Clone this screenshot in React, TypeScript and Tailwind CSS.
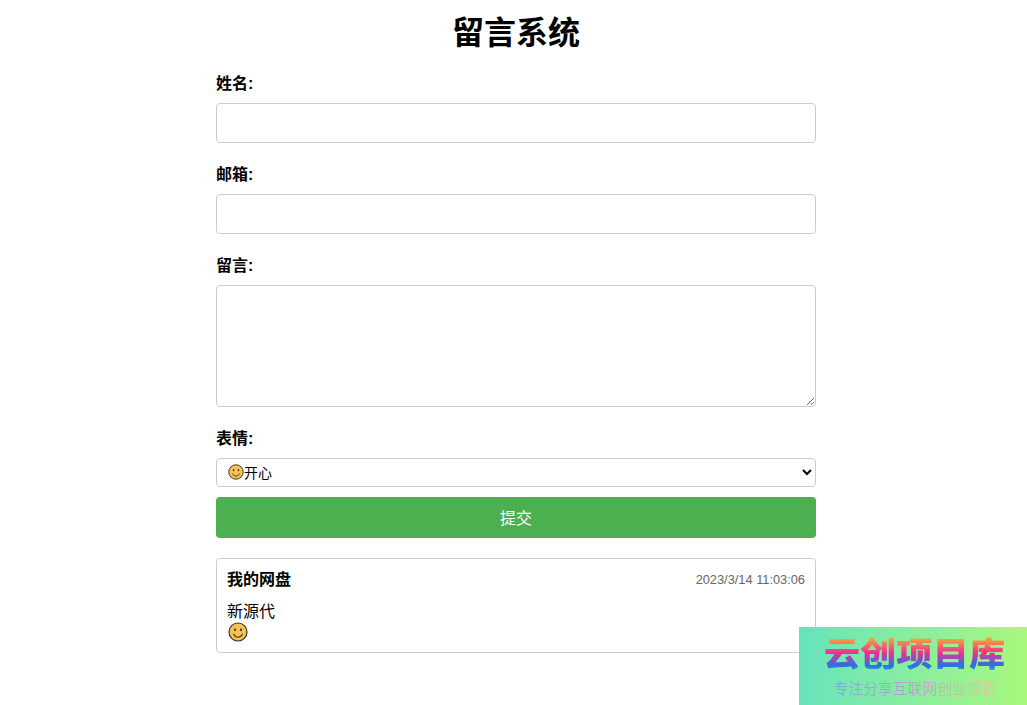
import { useState } from 'react'

const FONT = 'font-["Liberation_Sans","Noto_Sans_CJK_SC",sans-serif]'

function Smiley({ className }: { className: string }) {
  return (
    <svg viewBox="0 0 20 20" className={className}>
      <circle cx="10" cy="10" r="9" fill="#f6c253" stroke="#3a3228" strokeWidth="1.2" />
      <ellipse cx="7" cy="7.8" rx="1" ry="1.4" fill="#3a3228" />
      <ellipse cx="13" cy="7.8" rx="1" ry="1.4" fill="#3a3228" />
      <path d="M5.6 12.2c1.2 2.1 2.8 3 4.4 3s3.2-.9 4.4-3" fill="none" stroke="#3a3228" strokeWidth="1.1" strokeLinecap="round" />
    </svg>
  )
}

function Watermark() {
  return (
    <div className="absolute left-[799px] top-[627px] flex h-[78px] w-[228px] flex-col items-center bg-gradient-to-r from-[#66e3bb] to-[#a9f77c]">
      <div className="mt-[7px] ml-[3px] scale-x-[1.1] bg-[linear-gradient(180deg,#f7a13a_12%,#ee2f96_45%,#2c6fe0_75%,#35c4d8_100%)] bg-clip-text text-[33px] leading-[42px] font-black text-transparent">
        云创项目库
      </div>
      <div className='mt-[4px] ml-[4px] bg-gradient-to-r from-[#6fb0d8] via-[#b9a0cc] to-[#dccf9c] bg-clip-text font-["Liberation_Serif","Noto_Sans_CJK_SC",serif] text-[14.8px] leading-[18px] text-transparent'>
        专注分享互联网创业项目
      </div>
    </div>
  )
}

export default function App() {
  const [name, setName] = useState('')
  const [email, setEmail] = useState('')
  const [message, setMessage] = useState('')

  return (
    <div className={`relative h-[705px] overflow-hidden bg-white text-black ${FONT}`}>
      <div className="ml-[216px] w-[600px]">
        <h1 className="pt-[12px] text-center text-[32px] leading-[42px] font-bold">留言系统</h1>

        <label className="mt-[19px] block text-[16px] leading-[22px] font-bold">姓名:</label>
        <input
          value={name}
          onChange={(e) => setName(e.target.value)}
          className="mt-[8px] block h-[40px] w-full rounded border border-[#cccccc] px-[10px]"
        />

        <label className="mt-[21px] block text-[16px] leading-[22px] font-bold">邮箱:</label>
        <input
          value={email}
          onChange={(e) => setEmail(e.target.value)}
          className="mt-[8px] block h-[40px] w-full rounded border border-[#cccccc] px-[10px]"
        />

        <label className="mt-[21px] block text-[16px] leading-[22px] font-bold">留言:</label>
        <textarea
          value={message}
          onChange={(e) => setMessage(e.target.value)}
          className="mt-[8px] block h-[122px] w-full resize-y rounded border border-[#cccccc] px-[10px] py-[10px]"
        />

        <label className="mt-[21px] block text-[16px] leading-[22px] font-bold">表情:</label>
        <div className="relative mt-[8px]">
          <select className="block h-[29px] w-full rounded border border-[#cccccc] bg-white pl-[23px] text-[14px]">
            <option>开心</option>
            <option>难过</option>
            <option>生气</option>
          </select>
          <Smiley className="pointer-events-none absolute top-[6px] left-[12px] size-[16px]" />
        </div>

        <button className="mt-[10px] block h-[41px] w-full rounded bg-[#4caf50] pt-[2px] text-[16px] text-white">提交</button>

        <div className="mt-[20px] h-[95px] rounded border border-[#cccccc] px-[10px] pt-[10px]">
          <div className="flex items-center justify-between">
            <span className="text-[16px] leading-[22px] font-bold">我的网盘</span>
            <span className="text-[12.8px] leading-[22px] text-[#666666]">2023/3/14 11:03:06</span>
          </div>
          <p className="mt-[10px] text-[16px] leading-[21px]">新源代</p>
          <Smiley className="ml-[1px] size-[20px]" />
        </div>
      </div>
      <Watermark />
    </div>
  )
}
